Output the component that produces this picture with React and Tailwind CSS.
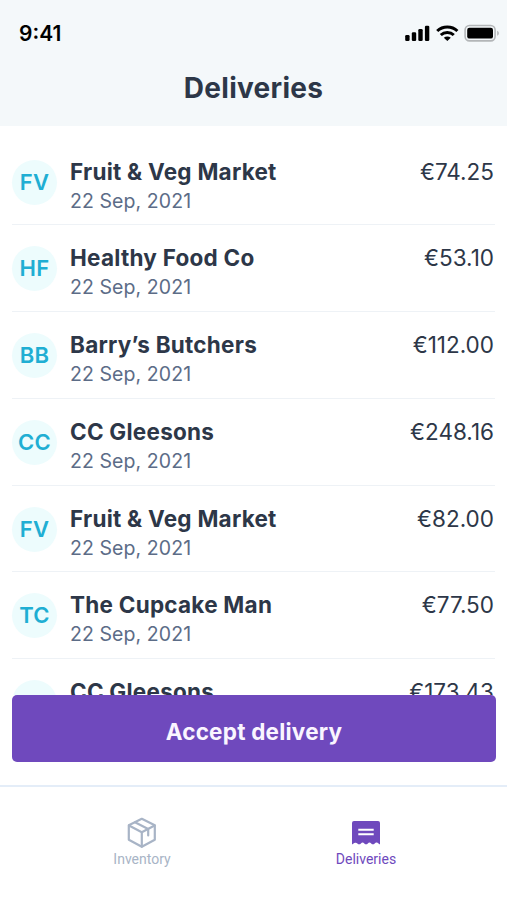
import React, { useState } from "react";

const deliveries = [
  { initials: "FV", name: "Fruit & Veg Market", date: "22 Sep, 2021", total: "€74.25" },
  { initials: "HF", name: "Healthy Food Co", date: "22 Sep, 2021", total: "€53.10" },
  { initials: "BB", name: "Barry’s Butchers", date: "22 Sep, 2021", total: "€112.00" },
  { initials: "CC", name: "CC Gleesons", date: "22 Sep, 2021", total: "€248.16" },
  { initials: "FV", name: "Fruit & Veg Market", date: "22 Sep, 2021", total: "€82.00" },
  { initials: "TC", name: "The Cupcake Man", date: "22 Sep, 2021", total: "€77.50" },
  { initials: "", name: "CC Gleesons", date: "", total: "€173.43" },
];

const StatusIcons = () => (
  <svg width="96" height="20" viewBox="0 0 96 20" fill="none">
    {/* signal */}
    <g fill="#000">
      <rect x="1.2" y="12" width="4.4" height="6" rx="1.3" />
      <rect x="7.8" y="9.2" width="4.4" height="8.8" rx="1.3" />
      <rect x="14.3" y="6" width="4.4" height="12" rx="1.3" />
      <rect x="20.9" y="2.8" width="4.4" height="15.2" rx="1.3" />
    </g>
    {/* wifi */}
    <g stroke="#000" strokeWidth="3">
      <path d="M33.2 8c5.6-5.4 14.6-5.4 20.2 0" />
      <path d="M36.8 12c3.6-3.5 9.4-3.5 13 0" />
    </g>
    <path d="M39.8 14.8c2-1.7 5-1.7 7 0l-3.5 3.3z" fill="#000" />
    {/* battery */}
    <rect x="61.1" y="2.5" width="30" height="15.4" rx="4.4" stroke="#b3b6b8" strokeWidth="1.6" />
    <rect x="63.2" y="4.8" width="25.8" height="10.8" rx="2.2" fill="#000" />
    <path d="M93.3 7.8c1.9.7 1.9 4.1 0 4.9z" fill="#a6a9ab" />
  </svg>
);

const BoxIcon = () => (
  <svg
    width="30"
    height="32"
    viewBox="0 0 30 32"
    fill="none"
    stroke="currentColor"
    strokeWidth="2.2"
    strokeLinejoin="round"
    strokeLinecap="round"
  >
    <path d="M14.8 1.8 27.8 8.3v14.5L14.8 29.8 1.8 22.8V8.3z" />
    <path d="M2 8.5 14.8 15.2l12.8-6.7M14.8 15.2v14.4" />
    <path d="M8 5.3 21.2 12v6.4" />
  </svg>
);

const ReceiptIcon = () => (
  <svg width="28" height="24" viewBox="0 0 28 24">
    <path
      d="M2 0h24a2 2 0 0 1 2 2v21.5l-2.2-1.5c-1.3-.8-2.2-.5-3.1.4-1.1 1.2-2.4 1.2-3.5 0-1.1-1.1-2.3-1.1-3.4 0-1.1 1.2-2.4 1.2-3.5 0-1.1-1.1-2.3-1.1-3.4 0-1.1 1.2-2.4 1.2-3.5 0-1-.9-1.9-1-3.1-.3L0 23.5V2a2 2 0 0 1 2-2z"
      fill="currentColor"
    />
    <path d="M6.3 8.8h15.4M6.3 13.3h15.4" stroke="#fff" strokeWidth="2" />
  </svg>
);

const DeliveryRow = ({ initials, name, date, total }) => (
  <li className="h-[86.75px] shrink-0 flex items-start border-b border-[#eef2f6] pt-[21px]">
    <div className="w-[45px] h-[45px] shrink-0 rounded-full bg-[#edfcfd] flex items-center justify-center text-[22px] font-semibold tracking-[0.01em] text-[#20aed3]">
      {initials}
    </div>
    <div className="ml-[13px] -mt-[3px] flex-1">
      <p className="text-[22.5px] leading-[30px] font-[650] tracking-[0.011em]">{name}</p>
      <p className="text-[19.5px] leading-7 tracking-[0.004em] text-[#5c6c87]">{date}</p>
    </div>
    <p className="-mt-[3px] mr-px text-[22.5px] leading-[30px]">{total}</p>
  </li>
);

const App = () => {
  const [tab, setTab] = useState("deliveries");

  return (
    <div className="w-full h-[900px] overflow-hidden flex flex-col bg-white text-[#2d3748] font-['Inter',sans-serif]">
      <header className="h-[126px] shrink-0 bg-[#f4f8fa]">
        <div className="flex items-start justify-between pl-[19px] pr-[7px] pt-[23px]">
          <span className="text-[21px] leading-[21px] font-semibold text-black">9:41</span>
          <StatusIcons />
        </div>
        <h1 className="mt-[26px] text-center text-[28px] leading-9 font-[650] tracking-[0.01em]">
          Deliveries
        </h1>
      </header>

      <main className="relative h-[659px] shrink-0">
        <ul className="h-[569px] overflow-hidden flex flex-col px-3 pt-[12.5px]">
          {deliveries.map((delivery, i) => (
            <DeliveryRow key={i} {...delivery} />
          ))}
        </ul>
        <button className="absolute left-3 right-[11px] top-[569px] h-[67px] rounded-[5px] bg-[#6f49bd] pt-[7px] text-[22.5px] font-[650] tracking-[0.01em] text-[#faf5ff]">
          Accept delivery
        </button>
      </main>

      <nav className="flex-1 flex border-t-2 border-[#e4edf8] px-[30px] pt-[30px] font-['Roboto',sans-serif] text-[14px] leading-4">
        <button
          onClick={() => setTab("inventory")}
          className={`flex-1 h-14 flex flex-col items-center pl-px ${tab === "inventory" ? "text-[#6f49bd]" : "text-[#a8b4c6]"}`}
        >
          <span className="h-8 mb-[2px]">
            <BoxIcon />
          </span>
          Inventory
        </button>
        <button
          onClick={() => setTab("deliveries")}
          className={`flex-1 h-14 flex flex-col items-center pl-[2px] ${tab === "deliveries" ? "text-[#6f49bd]" : "text-[#a8b4c6]"}`}
        >
          <span className="h-8 mb-[2px] pt-1">
            <ReceiptIcon />
          </span>
          Deliveries
        </button>
      </nav>
    </div>
  );
};

export default App;
